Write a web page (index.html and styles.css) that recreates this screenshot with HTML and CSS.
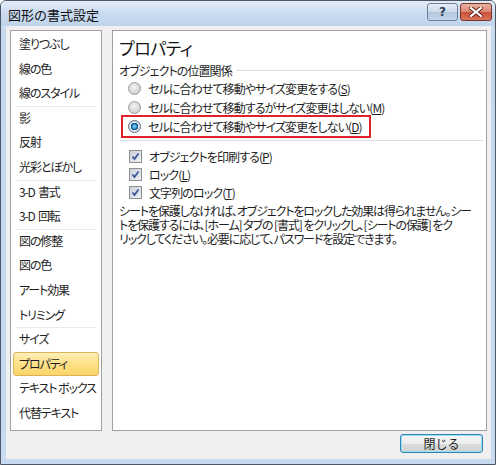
FILE: index.html
```html
<!DOCTYPE html>
<html>
<head>
    <title>図形の書式設定</title>
    <link rel="stylesheet" href="styles.css">
</head>
<body>
    <div class="window">
        <div class="titlebar">
            <span class="title">図形の書式設定</span>
            <div class="caption-buttons">
                <span class="cbtn help">?</span>
                <span class="cbtn close">
                    <svg width="14" height="10" viewBox="0 0 14 10">
                        <path d="M2 1 L12 9 M12 1 L2 9" stroke="#5a1a12" stroke-width="4" stroke-linecap="square"/>
                        <path d="M2 1 L12 9 M12 1 L2 9" stroke="#fff" stroke-width="2.2" stroke-linecap="square"/>
                    </svg>
                </span>
            </div>
        </div>
        <div class="client">
            <div class="main">
                <ul class="nav">
                    <li>塗りつぶし</li>
                    <li>線の色</li>
                    <li class="sep">線のスタイル</li>
                    <li>影</li>
                    <li>反射</li>
                    <li class="sep">光彩とぼかし</li>
                    <li>3-D&nbsp; 書式</li>
                    <li class="sep">3-D&nbsp; 回転</li>
                    <li>図の修整</li>
                    <li>図の色</li>
                    <li>アート効果</li>
                    <li class="sep">トリミング</li>
                    <li>サイズ</li>
                    <li class="active">プロパティ</li>
                    <li>テキスト ボックス</li>
                    <li>代替テキスト</li>
                </ul>
                <div class="page">
                    <h1>プロパティ</h1>
                    <div class="group-label">
                        <span>オブジェクトの位置関係</span>
                        <span class="rule"></span>
                    </div>
                    <div class="options">
                        <div class="row"><span class="radio"></span>セルに合わせて移動やサイズ変更をする(<u>S</u>)</div>
                        <div class="row"><span class="radio"></span>セルに合わせて移動するがサイズ変更はしない(<u>M</u>)</div>
                        <div class="row marked"><span class="radio checked"></span>セルに合わせて移動やサイズ変更をしない(<u>D</u>)</div>
                    </div>
                    <div class="divider"></div>
                    <div class="checks">
                        <div class="row"><span class="checkbox"></span>オブジェクトを印刷する(<u>P</u>)</div>
                        <div class="row"><span class="checkbox"></span>ロック(<u>L</u>)</div>
                        <div class="row"><span class="checkbox"></span>文字列のロック(<u>T</u>)</div>
                    </div>
                    <p class="note">シートを保護しなければ、オブジェクトをロックした効果は得られません。シー<br>トを保護するには、[ホーム] タブの [書式] をクリックし、[シートの保護] をク<br>リックしてください。必要に応じて、パスワードを設定できます。</p>
                </div>
            </div>
            <div class="footer">
                <button class="btn">閉じる</button>
            </div>
        </div>
    </div>
</body>
</html>
```

FILE: styles.css
```css
body {
    margin: 0;
    background: #fff;
    font-family: "Noto Sans CJK JP", "Noto Sans", sans-serif;
    font-size: 12px;
    color: #1e1e1e;
    font-feature-settings: "palt";
}
.window {
    width: 494px;
    height: 463px;
    border: 1px solid #4d5866;
    border-radius: 6px 6px 0 0;
    background: linear-gradient(#d9e6f4, #c4d7ed 40px, #c7daef);
    display: flex;
    flex-direction: column;
}
.titlebar {
    height: 25px;
    display: flex;
    align-items: center;
    justify-content: space-between;
    padding: 0 3px 0 7px;
    border-radius: 5px 5px 0 0;
    background: linear-gradient(#e3edf8, #cbdcf0 12px, #bfd4ec);
}
.title {
    font-size: 13px;
    color: #111;
    margin-top: 1px;
    font-feature-settings: normal;
}
.caption-buttons {
    display: flex;
    gap: 2px;
    align-self: flex-start;
    margin-top: 2px;
}
.cbtn {
    width: 29px;
    height: 16px;
    border: 1px solid #6e7f95;
    border-radius: 3px;
    display: flex;
    align-items: center;
    justify-content: center;
}
.help {
    background: linear-gradient(#e6eef7, #cad9ea 50%, #b4c7de 51%, #c3d5ea);
    color: #2f3e52;
    font-family: "DejaVu Sans", sans-serif;
    font-weight: bold;
    font-size: 12px;
}
.close {
    width: 30px;
    border-color: #7a3328;
    background: linear-gradient(#eab4a6, #d98472 50%, #c9513b 51%, #d9735c);
}
.client {
    flex: 1;
    margin: 0 4px 5px 5px;
    background: #f0f0f0;
    padding: 4px 4px 0 4px;
    display: flex;
    flex-direction: column;
}
.main {
    height: 401px;
    display: flex;
    gap: 10px;
}
.nav {
    list-style: none;
    margin: 0;
    padding: 1px 2px;
    width: 86px;
    border: 1px solid #a0a0a0;
    background: #fff;
    letter-spacing: -1.1px;
}
.nav li {
    height: 24.6px;
    line-height: 24px;
    padding-left: 6px;
    box-sizing: border-box;
    white-space: nowrap;
    position: relative;
}
.nav li.sep::after {
    content: "";
    position: absolute;
    left: 2px;
    right: 2px;
    bottom: -1px;
    border-top: 1px solid #ececec;
}
.nav li.active {
    border: 1px solid #ddb259;
    border-radius: 3px;
    padding-left: 5px;
    line-height: 22px;
    background: linear-gradient(#fff0b9, #fde28a 45%, #fbd468);
}
.page {
    flex: 1;
    border: 1px solid #a0a0a0;
    background: #fff;
    padding: 0 2px 0 6px;
    letter-spacing: -0.9px;
}
h1 {
    font-size: 17px;
    font-weight: normal;
    margin: 7px 0 0 0;
    line-height: 20px;
    color: #111;
    letter-spacing: -0.5px;
}
.group-label {
    display: flex;
    align-items: center;
    margin-top: 5px;
    height: 14px;
}
.rule {
    flex: 1;
    border-top: 1px solid #d5dfe5;
    margin-left: 4px;
    margin-top: 1px;
}
.options {
    margin-top: 2px;
    padding-left: 9px;
}
.row {
    display: flex;
    align-items: center;
    height: 19px;
    white-space: nowrap;
    position: relative;
}
.radio {
    width: 11px;
    height: 11px;
    border: 1px solid #9b9b9b;
    border-radius: 50%;
    margin-right: 7px;
    box-sizing: content-box;
    background: radial-gradient(circle at 45% 40%, #f4f4f4, #d7d7d7 60%, #c2c2c2);
}
.radio.checked {
    border-color: #5b6f87;
    background: radial-gradient(circle at 50% 50%, #8fe1fd 0, #1f7ec2 2.5px, #14467e 3.5px, #e9eef3 4px, #c8ced4 6px);
}
.row.marked::after {
    content: "";
    position: absolute;
    left: -7px;
    top: -2px;
    width: 246px;
    height: 19px;
    border: 2px solid #e0232b;
}
.divider {
    border-top: 1px solid #d5dfe5;
    margin: 4px 1px 0 1px;
}
.checks {
    margin-top: 6px;
    padding-left: 10px;
}
.checks .row {
    height: 18px;
}
.checkbox {
    width: 11px;
    height: 11px;
    border: 1px solid #8e8f8f;
    margin-right: 7px;
    background:
        url("data:image/svg+xml;utf8,<svg xmlns='http://www.w3.org/2000/svg' width='11' height='11'><path d='M2.5 5.5 L4.5 8 L8.5 2.5' fill='none' stroke='%233b5896' stroke-width='1.8'/></svg>") center no-repeat,
        linear-gradient(135deg, #cbd0dc, #eef0f4);
}
.note {
    margin: 3px 0 0 0;
    line-height: 14px;
    white-space: nowrap;
    letter-spacing: -1.1px;
}
.footer {
    display: flex;
    justify-content: flex-end;
    padding: 3px 4px 0 0;
}
.btn {
    width: 83px;
    height: 19px;
    padding: 0;
    font-family: inherit;
    font-size: 12px;
    color: #1e1e1e;
    border: 1px solid #3c7fb1;
    border-radius: 3px;
    box-shadow: inset 0 0 0 1px #8ee3f8;
    background: linear-gradient(#f6f6f6, #ececec 50%, #dcdcdc 51%, #d2d2d2);
    line-height: 16px;
}
```
